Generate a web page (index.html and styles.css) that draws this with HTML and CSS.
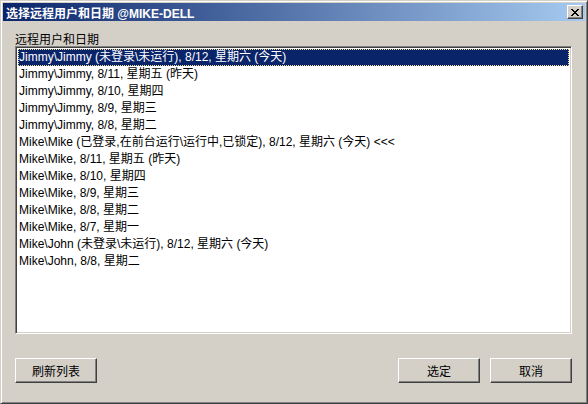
FILE: index.html
```html
<!DOCTYPE html>
<html lang="zh-CN">
  <head>
    <meta charset="UTF-8" />
    <title>选择远程用户和日期</title>
    <link rel="stylesheet" href="styles.css">
  </head>
  <body>
    <div class="window">
      <!-- title bar -->
      <div class="titlebar">
        <span class="title">选择远程用户和日期 @MIKE-DELL</span>
        <button class="close">
          <svg width="8" height="7" viewBox="0 0 8 7">
            <path d="M0 0h2v1H0zM6 0h2v1H6zM1 1h2v1H1zM5 1h2v1H5zM2 2h4v1H2zM3 3h2v1H3zM2 4h4v1H2zM1 5h2v1H1zM5 5h2v1H5zM0 6h2v1H0zM6 6h2v1H6z" fill="#000"/>
          </svg>
        </button>
      </div>

      <div class="content">
        <div class="label">远程用户和日期</div>
        <div class="listbox">
          <div class="item selected">Jimmy\Jimmy (未登录\未运行), 8/12, 星期六 (今天)</div>
          <div class="item">Jimmy\Jimmy, 8/11, 星期五 (昨天)</div>
          <div class="item">Jimmy\Jimmy, 8/10, 星期四</div>
          <div class="item">Jimmy\Jimmy, 8/9, 星期三</div>
          <div class="item">Jimmy\Jimmy, 8/8, 星期二</div>
          <div class="item">Mike\Mike (已登录,在前台运行\运行中,已锁定), 8/12, 星期六 (今天) &lt;&lt;&lt;</div>
          <div class="item">Mike\Mike, 8/11, 星期五 (昨天)</div>
          <div class="item">Mike\Mike, 8/10, 星期四</div>
          <div class="item">Mike\Mike, 8/9, 星期三</div>
          <div class="item">Mike\Mike, 8/8, 星期二</div>
          <div class="item">Mike\Mike, 8/7, 星期一</div>
          <div class="item">Mike\John (未登录\未运行), 8/12, 星期六 (今天)</div>
          <div class="item">Mike\John, 8/8, 星期二</div>
        </div>

        <div class="buttons">
          <button class="btn">刷新列表</button>
          <div class="spacer"></div>
          <button class="btn">选定</button>
          <button class="btn">取消</button>
        </div>
      </div>
    </div>
  </body>
</html>
```

FILE: styles.css
```css
body {
  margin: 0;
  background: #d4d0c8;
  font-family: "Liberation Sans", "Noto Sans CJK SC", sans-serif;
  font-size: 12px;
}
.window {
  width: 588px;
  height: 404px;
  box-sizing: border-box;
  border: 1px solid;
  border-color: #d4d0c8 #404040 #404040 #d4d0c8;
  box-shadow: inset 1px 1px #fff, inset -1px -1px #808080;
  padding: 2px;
  background: #d4d0c8;
  display: flex;
  flex-direction: column;
}
.titlebar {
  height: 18px;
  background: linear-gradient(to right, #0a246a, #a6caf0);
  display: flex;
  align-items: center;
  padding: 0 2px 0 3px;
}
.title {
  flex: 1;
  color: #fff;
  font-weight: bold;
  font-size: 12px;
  white-space: nowrap;
}
.close {
  width: 16px;
  height: 14px;
  padding: 0;
  margin: 0;
  background: #d4d0c8;
  border: 1px solid;
  border-color: #fff #404040 #404040 #fff;
  box-shadow: inset -1px -1px #808080;
  display: flex;
  align-items: center;
  justify-content: center;
}
.content {
  flex: 1;
  padding: 12px 13px 0 12px;
  display: flex;
  flex-direction: column;
}
.label {
  height: 13px;
  line-height: 15px;
  color: #000;
}
.listbox {
  height: 288px;
  box-sizing: border-box;
  border: 1px solid;
  border-color: #808080 #fff #fff #808080;
  box-shadow: inset 1px 1px #404040, inset -1px -1px #d4d0c8;
  padding: 2px;
  background: #fff;
  overflow: hidden;
}
.item {
  height: 17px;
  line-height: 17px;
  padding-left: 1px;
  white-space: nowrap;
  color: #000;
}
.item.selected {
  background: #0a246a;
  color: #fff;
  outline: 1px dotted #f5db95;
  outline-offset: -1px;
}
.buttons {
  display: flex;
  margin-top: 24px;
  gap: 10px;
}
.spacer {
  flex: 1;
}
.btn {
  width: 82px;
  height: 25px;
  padding: 0;
  background: #d4d0c8;
  border: 1px solid;
  border-color: #fff #404040 #404040 #fff;
  box-shadow: inset -1px -1px #808080;
  font-family: "Liberation Sans", "Noto Sans CJK SC", sans-serif;
  font-size: 12px;
  color: #000;
}
```
